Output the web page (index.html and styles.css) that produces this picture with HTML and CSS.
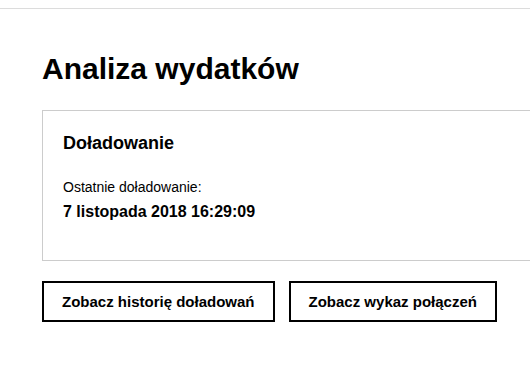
FILE: index.html
```html
<!DOCTYPE html>
<html lang="pl">
<head>
  <meta charset="UTF-8">
  <title>Analiza wydatków</title>
  <link rel="stylesheet" href="styles.css">
</head>
<body>
  <div class="topbar"></div>

  <main class="page">
    <h1>Analiza wydatków</h1>

    <section class="karta">
      <h2>Doładowanie</h2>
      <p class="etykieta">Ostatnie doładowanie:</p>
      <p class="data">7 listopada 2018 16:29:09</p>
    </section>

    <div class="przyciski">
      <button class="btn">Zobacz historię doładowań</button>
      <button class="btn">Zobacz wykaz połączeń</button>
    </div>
  </main>
</body>
</html>
```

FILE: styles.css
```css
body {
  margin: 0;
  font-family: "Liberation Sans", Arial, sans-serif;
  color: #000;
  background: #fff;
}

.topbar {
  height: 8px;
  border-bottom: 1px solid #dcdcdc;
}

.page {
  padding: 0 0 0 42px;
}

h1 {
  font-size: 30px;
  font-weight: bold;
  margin: 40px 0 0 0;
  line-height: 40px;
}

/* la carte continue hors de l'écran à droite */
.karta {
  border: 1px solid #cccccc;
  border-right: none;
  margin-top: 21px;
  padding: 20px 20px 37px 20px;
}

h2 {
  font-size: 18px;
  margin: 0;
  line-height: 24px;
}

.etykieta {
  font-size: 14px;
  margin: 23px 0 0 0;
  line-height: 18px;
}

.data {
  font-size: 16px;
  font-weight: bold;
  margin: 5px 0 0 0;
  line-height: 22px;
}

.przyciski {
  display: flex;
  gap: 14px;
  margin-top: 20px;
}

.btn {
  font-family: "Liberation Sans", Arial, sans-serif;
  font-size: 15px;
  font-weight: bold;
  background: #fff;
  color: #000;
  border: 2px solid #000;
  padding: 0 18px;
  height: 41px;
  cursor: pointer;
}
```
